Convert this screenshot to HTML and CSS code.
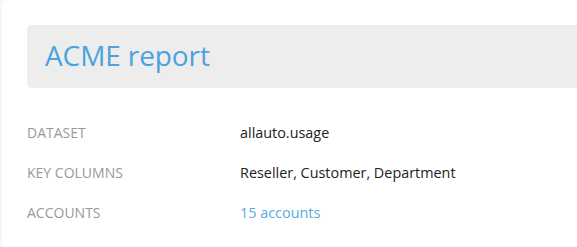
FILE: index.html
```html
<!DOCTYPE html>
<html lang="en">
<head>
    <meta charset="UTF-8">
    <meta name="viewport" content="width=device-width, initial-scale=1.0">
    <title>ACME report</title>
    <link rel="stylesheet" href="styles.css">
</head>
<body>
    <div class="page">
        <header class="report-header">
            <h1>ACME report</h1>
        </header>

        <dl class="report-info">
            <div class="info-row">
                <dt>Dataset</dt>
                <dd>allauto.usage</dd>
            </div>
            <div class="info-row">
                <dt>Key columns</dt>
                <dd>Reseller, Customer, Department</dd>
            </div>
            <div class="info-row">
                <dt>Accounts</dt>
                <dd><a href="#">15 accounts</a></dd>
            </div>
        </dl>
    </div>
</body>
</html>
```

FILE: styles.css
```css
* {
    margin: 0;
    padding: 0;
    box-sizing: border-box;
    font-family: 'Open Sans', 'Noto Sans', sans-serif;
}

body {
    background-color: #f6f6f6;
    color: #222;
    overflow: hidden;
}

.page {
    background-color: #ffffff;
    margin-left: 2px;
    min-height: 100vh;
    border-top-left-radius: 5px;
    padding: 25px 0 0 25px;
}

.report-header {
    background-color: #ededed;
    border-radius: 5px 0 0 5px;
    height: 63px;
    display: flex;
    align-items: center;
    padding-left: 18px;
}

h1 {
    font-size: 28px;
    font-weight: 400;
    color: #4aa3df;
    letter-spacing: -0.1px;
    margin-top: -3px;
}

.report-info {
    padding-top: 24px;
}

.info-row {
    display: flex;
    align-items: center;
    height: 40px;
    font-size: 14.4px;
}

.info-row dt {
    width: 213px;
    color: #999;
    text-transform: uppercase;
    font-size: 14px;
}

.info-row dd a {
    color: #5aaae0;
    text-decoration: none;
}
```
